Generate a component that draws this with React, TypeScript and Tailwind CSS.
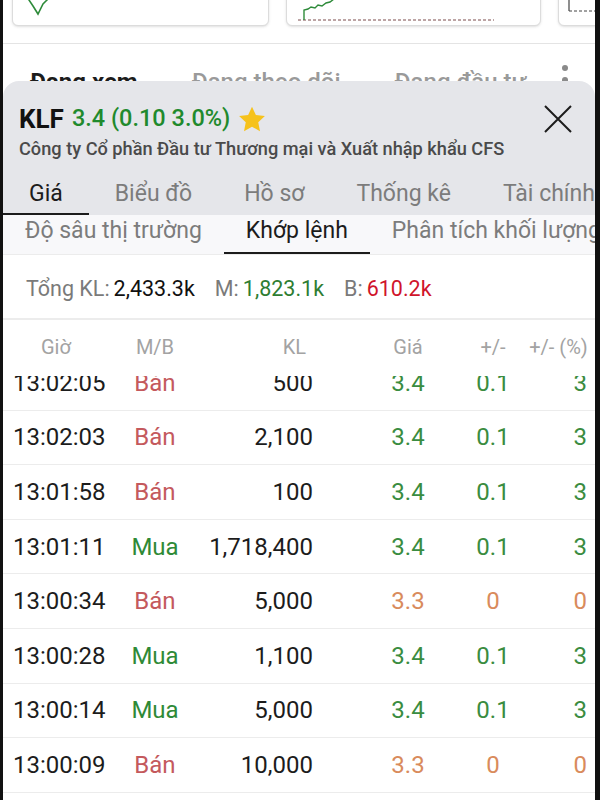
import React from 'react';

type Trade = {
  t: string;
  side: 'Mua' | 'Bán';
  kl: string;
  price: string;
  ch: string;
  pct: string;
  up: boolean;
};

const TRADES: Trade[] = [
  { t: '13:02:05', side: 'Bán', kl: '500', price: '3.4', ch: '0.1', pct: '3', up: true },
  { t: '13:02:03', side: 'Bán', kl: '2,100', price: '3.4', ch: '0.1', pct: '3', up: true },
  { t: '13:01:58', side: 'Bán', kl: '100', price: '3.4', ch: '0.1', pct: '3', up: true },
  { t: '13:01:11', side: 'Mua', kl: '1,718,400', price: '3.4', ch: '0.1', pct: '3', up: true },
  { t: '13:00:34', side: 'Bán', kl: '5,000', price: '3.3', ch: '0', pct: '0', up: false },
  { t: '13:00:28', side: 'Mua', kl: '1,100', price: '3.4', ch: '0.1', pct: '3', up: true },
  { t: '13:00:14', side: 'Mua', kl: '5,000', price: '3.4', ch: '0.1', pct: '3', up: true },
  { t: '13:00:09', side: 'Bán', kl: '10,000', price: '3.3', ch: '0', pct: '0', up: false },
  { t: '13:00:02', side: 'Mua', kl: '3,000', price: '3.4', ch: '0.1', pct: '3', up: true },
];

const MAIN_TABS = ['Giá', 'Biểu đồ', 'Hồ sơ', 'Thống kê', 'Tài chính'];
const SUB_TABS = ['Độ sâu thị trường', 'Khớp lệnh', 'Phân tích khối lượng'];

export default function App() {
  return (
    <div
      className="w-[600px] h-[800px] overflow-hidden flex bg-[#111]"
      style={{ fontFamily: 'Roboto, "Noto Sans", sans-serif' }}
    >
      <div className="w-[3px] shrink-0 bg-[#111]" />
      <div className="flex-1 min-w-0 flex flex-col bg-white overflow-hidden">
        <Backdrop />
        <Sheet />
      </div>
      <div className="w-[5px] shrink-0 bg-[#111]" />
    </div>
  );
}

function Backdrop() {
  return (
    <div className="h-[81px] shrink-0 overflow-hidden">
      <div className="flex gap-[17px] pl-[9px] -mt-[34px]">
        <div className="w-[257px] h-[60px] shrink-0 rounded-[6px] border border-[#dcdcdc] bg-white shadow-sm overflow-hidden">
          <svg width="257" height="60" viewBox="0 0 257 60">
            <polyline
              points="14,30 20,39 25,47 30,37 34,33 40,28"
              fill="none"
              stroke="#2e8b3a"
              strokeWidth="1.6"
            />
          </svg>
        </div>
        <div className="w-[255px] h-[60px] shrink-0 rounded-[6px] border border-[#dcdcdc] bg-white shadow-sm overflow-hidden">
          <svg width="255" height="60" viewBox="0 0 255 60">
            <line x1="11" y1="53" x2="207" y2="53" stroke="#7a4a4a" strokeWidth="1" strokeDasharray="3 2" />
            <polyline
              points="17,53 17,43 21,42 24,40 28,41 31,38 35,39 39,36 43,35 47,32 52,30"
              fill="none"
              stroke="#2e8b3a"
              strokeWidth="1.4"
            />
          </svg>
        </div>
        <div className="w-[255px] h-[60px] shrink-0 rounded-[6px] border border-[#dcdcdc] bg-white shadow-sm overflow-hidden">
          <svg width="255" height="60" viewBox="0 0 255 60">
            <line x1="10" y1="30" x2="10" y2="44" stroke="#444" strokeWidth="1.2" />
            <line x1="10" y1="44" x2="60" y2="44" stroke="#444" strokeWidth="1" strokeDasharray="3 2" />
          </svg>
        </div>
      </div>
      <div className="mt-[17px] border-t border-[#e4e4e4]" />
      <div className="flex items-start mt-[23px] text-[24px] leading-[30px] whitespace-nowrap">
        <span className="ml-[27px] font-bold text-[#1c1c1c]">Đang xem</span>
        <span className="ml-[54px] font-medium text-[#9a9a9a]">Đang theo dõi</span>
        <span className="ml-[54px] font-medium text-[#9a9a9a]">Đang đầu tư</span>
        <div className="ml-[36px] -mt-[2px] flex flex-col gap-[6px]">
          <span className="w-[6px] h-[6px] rounded-full bg-[#8a8a8a]" />
          <span className="w-[6px] h-[6px] rounded-full bg-[#8a8a8a]" />
          <span className="w-[6px] h-[6px] rounded-full bg-[#8a8a8a]" />
        </div>
      </div>
    </div>
  );
}

function Sheet() {
  return (
    <div className="flex-1 min-h-0 flex flex-col rounded-t-[16px] bg-white overflow-hidden">
      <div className="bg-[#e5e6ea]">
        <div className="flex items-center justify-between pl-[16px] pr-[23px] pt-[22px]">
          <div className="flex items-center h-[32px] whitespace-nowrap">
            <span className="text-[26px] font-bold text-[#111]">KLF</span>
            <span className="ml-[8px] text-[23.5px] font-medium text-[#1f8a2d]">3.4 (0.10 3.0%)</span>
            <svg className="ml-[7px]" width="30" height="29" viewBox="0 0 24 23">
              <path
                d="M12 1.2l3.1 6.6 7.2.9-5.3 5 1.4 7.1L12 17.3 5.6 20.8 7 13.7l-5.3-5 7.2-.9z"
                fill="#f6c21c"
              />
            </svg>
          </div>
          <svg width="28" height="28" viewBox="0 0 28 28">
            <path d="M1 1L27 27M27 1L1 27" stroke="#1c1c1c" strokeWidth="2" />
          </svg>
        </div>
        <div className="pl-[16px] mt-[3px] text-[18.2px] leading-[22px] font-medium text-[#4a4a4a] whitespace-nowrap">
          Công ty Cổ phần Đầu tư Thương mại và Xuất nhập khẩu CFS
        </div>
        <div className="flex h-[55px] whitespace-nowrap overflow-hidden">
          {MAIN_TABS.map((tab, i) => (
            <div
              key={tab}
              className={
                'shrink-0 flex flex-col justify-end px-[26px] pb-[5px] border-b-2 text-[23px] leading-[28px] ' +
                (i === 0 ? 'border-[#1c1c1c] text-[#1c1c1c]' : 'border-transparent text-[#7c7c7c]')
              }
            >
              {tab}
            </div>
          ))}
        </div>
      </div>

      <div className="flex h-[40px] bg-[#f8f8fa] border-b border-[#ececec] whitespace-nowrap overflow-hidden">
        {SUB_TABS.map((tab, i) => (
          <div
            key={tab}
            className={
              'shrink-0 flex flex-col justify-end px-[22px] pb-[7px] border-b-2 text-[23px] leading-[28px] ' +
              (i === 1 ? 'border-[#1c1c1c] text-[#1c1c1c]' : 'border-transparent text-[#7c7c7c]')
            }
          >
            {tab}
          </div>
        ))}
      </div>

      <div className="flex items-center h-[65px] pt-[5px] pl-[23px] border-b-2 border-[#ececec] text-[21.5px] whitespace-nowrap">
        <span className="text-[#7a7a7a]">Tổng KL: </span>
        <span className="ml-[4px] text-[#111]">2,433.3k</span>
        <span className="ml-[20px] text-[#7a7a7a]">M: </span>
        <span className="ml-[4px] text-[#2e7d32]">1,823.1k</span>
        <span className="ml-[20px] text-[#7a7a7a]">B: </span>
        <span className="ml-[4px] text-[#d0142b]">610.2k</span>
      </div>

      <div className="flex items-center h-[56px] pb-[2px] text-[20px] text-[#a3a3a3] whitespace-nowrap">
        <div className="w-[107px] pl-[38px]">Giờ</div>
        <div className="w-[90px] text-center">M/B</div>
        <div className="w-[113px] text-right pr-[7px]">KL</div>
        <div className="w-[145px] pl-[45px] text-center">Giá</div>
        <div className="w-[70px] text-center">+/-</div>
        <div className="w-[61px] text-center">+/- (%)</div>
      </div>

      <div className="flex-1 min-h-0 overflow-hidden">
        <div className="-mt-[20px]">
          {TRADES.map((r) => (
            <TradeRow key={r.t} r={r} />
          ))}
        </div>
      </div>
    </div>
  );
}

function TradeRow({ r }: { r: Trade }) {
  const val = r.up ? 'text-[#3a8c40]' : 'text-[#d98b5c]';
  return (
    <div className="flex items-center h-[54.6px] border-b border-[#ececec] text-[24px] whitespace-nowrap">
      <div className="w-[107px] pl-[10px] text-[#1c1c1c]">{r.t}</div>
      <div className={'w-[90px] text-center ' + (r.side === 'Mua' ? 'text-[#2f8a37]' : 'text-[#c4595d]')}>
        {r.side}
      </div>
      <div className="w-[113px] text-right text-[#1c1c1c]">{r.kl}</div>
      <div className={'w-[145px] pl-[45px] text-center ' + val}>{r.price}</div>
      <div className={'w-[70px] text-center ' + val}>{r.ch}</div>
      <div className={'w-[61px] text-right pr-[2px] ' + val}>{r.pct}</div>
    </div>
  );
}
